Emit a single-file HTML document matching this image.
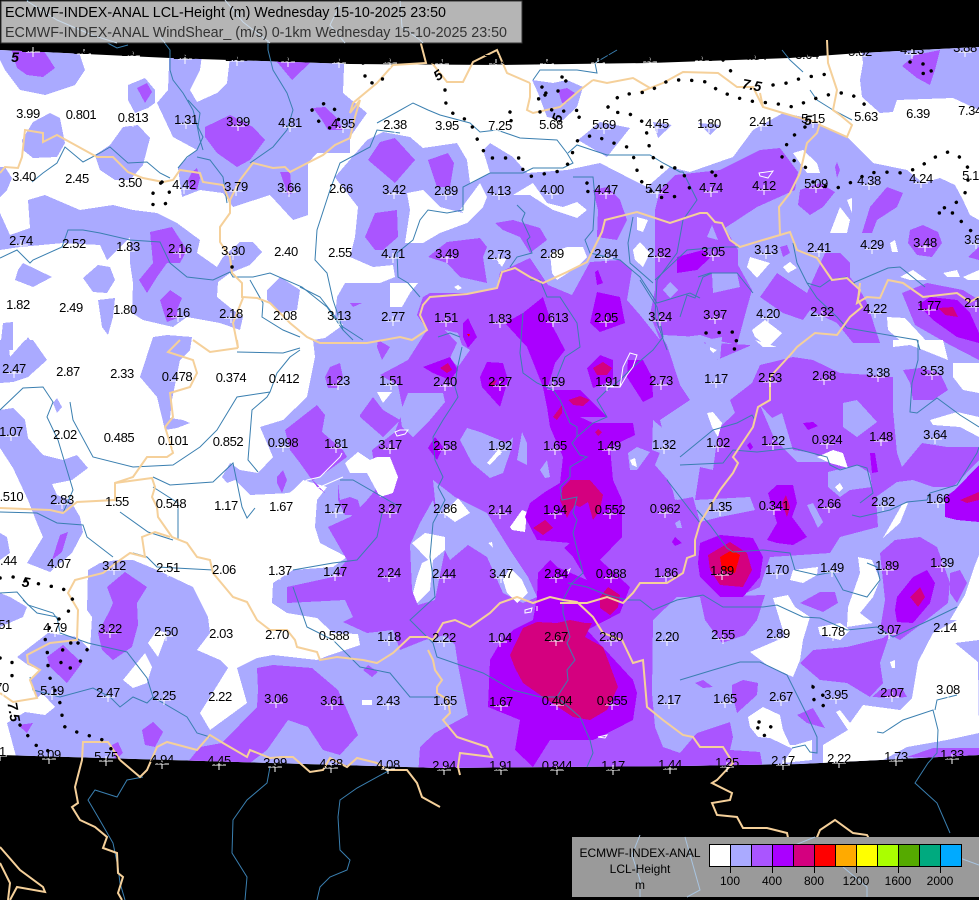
<!DOCTYPE html>
<html><head><meta charset="utf-8"><style>
html,body{margin:0;padding:0;background:#000;width:979px;height:900px;overflow:hidden}
svg{display:block}
.l text{font:13px "Liberation Sans",sans-serif;letter-spacing:-.4px;fill:#000;text-anchor:middle}
.c text{font:italic bold 14px "Liberation Sans",sans-serif;fill:#000;text-anchor:middle}
.f polygon{shape-rendering:crispEdges}
.r{fill:none;stroke:#3a7fb0;stroke-width:1}
.t{fill:none;stroke:#f5d09a;stroke-width:2}
.d{fill:none;stroke:#000;stroke-width:3.4;stroke-linecap:round;stroke-dasharray:.1 13}
.w{fill:none;stroke:#fff;stroke-width:1}
</style></head><body>
<svg width="979" height="900" viewBox="0 0 979 900" xmlns="http://www.w3.org/2000/svg">
<defs>
<clipPath id="m"><path d="M0,50L170,58L350,64L500,65L650,63L790,58L860,53L979,47L979,755L800,764L680,766L440,768L0,755Z"/></clipPath>
<marker id="x" markerUnits="userSpaceOnUse" markerWidth="18" markerHeight="18" refX="9" refY="9" overflow="visible"><path d="M2,9H16M9,4V14" stroke="#fff" stroke-width="1" fill="none"/></marker>
</defs>
<rect width="979" height="900" fill="#000"/>
<g clip-path="url(#m)" class="f">
<rect width="979" height="900" fill="#fff"/>
<g fill="#aaaaff">
<polygon points="0,40 75,40 85,70 75,85 45,95 20,90 5,70 0,60"/>
<polygon points="128,85 145,78 155,90 155,103 148,108 135,113 128,100"/>
<polygon points="170,40 204,40 200,70 190,90 197,102 217,93 227,83 232,40 345,40 343,93 367,113 350,137 350,153 317,153 308,163 308,215 293,220 270,195 233,207 223,193 200,190 182,197 178,168 190,155 197,150 173,137 157,103 168,90"/>
<polygon points="95,155 110,145 123,127 138,125 150,138 143,165 130,180 115,180 100,170"/>
<polygon points="22,140 33,122 50,113 60,118 65,143 57,157 33,158 23,150"/>
<polygon points="0,167 5,167 12,178 7,190 0,197"/>
<polygon points="0,213 10,235 30,228 28,200 45,195 80,210 113,205 133,210 157,213 177,223 200,240 197,253 217,267 223,257 240,242 253,242 262,252 250,265 230,273 218,282 217,297 233,310 243,317 240,330 220,323 187,317 173,327 143,320 132,313 133,283 130,263 130,237 107,260 100,245 63,243 20,247 0,250"/>
<polygon points="23,263 52,277 33,287 15,280 18,270"/>
<polygon points="83,278 98,265 110,267 115,280 107,293 93,292"/>
<polygon points="98,300 115,298 113,317 108,335 102,327"/>
<polygon points="3,323 13,322 13,350 0,350"/>
<polygon points="20,350 28,337 37,350"/>
<polygon points="0,340 8,340 10,357 25,340 33,340 47,360 28,377 13,382 0,383"/>
<polygon points="267,290 280,277 300,290 297,310 280,313 267,300"/>
<polygon points="140,377 153,337 167,335 192,337 190,350 180,360 172,400 170,418 183,420 190,423 177,428 165,430 157,397"/>
<polygon points="0,410 13,408 25,420 28,438 43,455 63,460 77,455 88,468 72,480 52,484 57,495 70,500 80,517 83,532 72,553 50,572 27,563 43,537 37,523 28,500 13,468 0,448"/>
<polygon points="53,403 57,398 62,407 57,413"/>
<polygon points="0,533 7,537 10,553 0,560"/>
<polygon points="0,593 10,597 27,607 23,617 0,627"/>
<polygon points="532,80 553,83 567,80 583,87 577,107 563,120 547,117 538,93"/>
<polygon points="578,140 600,122 630,128 607,157"/>
<polygon points="653,122 672,125 658,138"/>
<polygon points="698,123 720,125 710,135"/>
<polygon points="860,40 979,40 979,110 953,98 897,100 893,112 880,113 862,97 860,80 863,63"/>
<polygon points="335,177 367,140 383,132 410,137 423,148 457,143 467,160 470,183 490,173 483,150 490,143 513,157 527,173 567,170 600,163 633,180 647,187 670,167 690,172 733,157 753,130 783,113 803,117 847,137 873,163 907,170 923,183 940,178 955,185 963,200 970,215 979,220 979,800 0,800 17,760 7,723 25,712 45,715 55,707 42,693 37,698 33,690 30,680 40,670 28,665 17,657 48,633 77,637 90,650 92,617 87,610 88,570 100,563 117,560 133,560 157,570 193,587 208,617 210,633 197,650 220,660 228,668 200,713 210,730 247,703 237,668 257,658 273,655 317,660 330,655 360,645 358,634 333,633 317,618 287,613 272,603 273,583 293,570 333,567 347,557 320,543 315,527 317,500 327,487 303,480 290,493 250,495 235,480 227,483 222,477 230,463 240,470 258,473 273,457 260,427 283,420 307,397 315,357 313,340 325,338 343,325 335,317 337,297 345,283 380,283 395,277 393,265 373,267 350,257 355,237 358,207 337,180"/>
</g>
<g fill="#aa55ff">
<polygon points="10,45 40,45 55,68 43,77 27,75 17,68"/>
<polygon points="137,88 147,83 152,92 145,103"/>
<polygon points="205,127 230,115 253,127 265,140 250,160 237,167 217,153 205,137"/>
<polygon points="267,50 313,50 313,60 292,80"/>
<polygon points="313,108 325,107 337,118 343,130 328,130 322,120"/>
<polygon points="280,172 290,172 292,193 288,195"/>
<polygon points="192,172 197,168 200,178 197,190 190,190 188,180"/>
<polygon points="150,232 172,227 187,250 180,263 167,263 157,277 147,293 139,280 153,263"/>
<polygon points="160,300 170,290 182,298 177,310 180,317 167,322 163,310"/>
<polygon points="902,66 915,55 940,50 935,70 930,85 917,78"/>
<polygon points="368,160 380,142 395,138 415,160 395,183"/>
<polygon points="428,160 448,153 454,163 450,187 437,187"/>
<polygon points="365,237 375,213 397,210 398,237 383,250 375,250"/>
<polygon points="428,257 447,242 480,238 487,247 483,257 487,283 460,277 447,263"/>
<polygon points="495,223 513,220 540,228 547,240 530,253 520,237 503,230"/>
<polygon points="593,190 607,187 620,200 627,220 617,240 597,237 598,210"/>
<polygon points="350,303 362,303 353,307"/>
<polygon points="558,90 567,88 575,93 567,103 562,103"/>
<polygon points="800,190 820,183 835,192 823,207 810,215 798,205"/>
<polygon points="862,233 870,207 887,187 903,193 897,207 877,220 872,233"/>
<polygon points="835,167 837,162 840,170 837,178"/>
<polygon points="910,230 923,225 938,232 942,243 932,257 917,255 908,243"/>
<polygon points="968,257 979,247 979,260"/>
<polygon points="780,247 787,245 790,253 783,257"/>
<polygon points="655,290 655,210 660,190 675,175 720,170 760,150 780,148 798,172 795,190 757,207 725,228 738,250 738,265 752,290 745,315 737,345 715,340 700,335 660,340 650,315"/>
<polygon points="760,297 777,273 807,293 825,253 840,253 850,263 850,277 860,290 867,303 880,343 853,343 837,323 810,310 803,320 783,313"/>
<polygon points="903,370 920,368 940,373 948,390 933,400 913,400 910,383"/>
<polygon points="902,293 927,283 963,290 979,300 979,360 950,345 915,325"/>
<polygon points="752,383 760,365 793,357 813,360 840,373 870,375 893,377 893,410 897,453 902,467 922,443 947,447 979,447 979,460 953,487 933,487 913,480 897,482 876,497 878,527 840,537 830,553 770,557 760,587 730,600 697,597 677,597 653,620 652,693 655,727 663,747 680,753 697,733 730,722 733,737 730,750 760,752 767,790 417,790 420,747 435,733 468,715 458,665 455,645 445,635 425,640 400,650 393,630 367,633 343,622 353,617 345,600 287,603 287,587 333,577 347,560 328,527 350,517 367,500 377,488 372,450 395,432 403,410 398,385 380,375 408,360 427,330 417,315 423,297 430,293 473,293 497,288 500,272 530,258 548,285 572,295 590,262 620,260 632,270 627,300 640,315 660,340 750,345"/>
<polygon points="285,430 317,405 325,415 322,432 343,450 347,457 325,473 313,480 325,493 317,487 300,463 290,450"/>
<polygon points="277,477 283,470 287,480 282,493 277,483"/>
<polygon points="360,415 373,397 383,410 400,420 383,437 360,417"/>
<polygon points="325,377 330,367 340,363 343,377 337,388 328,388"/>
<polygon points="378,340 390,347 382,360 377,347"/>
<polygon points="338,483 340,500 350,497 358,500 362,515 345,515 338,500"/>
<polygon points="98,633 110,610 113,603 107,587 125,572 147,587 137,603 138,625 132,647 113,660 102,650"/>
<polygon points="47,657 63,645 82,663 67,683 50,667"/>
<polygon points="18,725 33,723 27,733"/>
<polygon points="112,745 118,742 123,753 115,760"/>
<polygon points="142,730 153,722 163,732 155,747 145,745"/>
<polygon points="60,535 68,532 62,552 52,560"/>
<polygon points="257,668 273,665 312,668 338,690 347,710 358,735 340,755 323,750 308,727 288,720 267,750 250,763 187,763 200,747 222,743 257,707 258,690"/>
<polygon points="363,670 368,665 378,672 372,677"/>
<polygon points="880,553 895,540 920,537 937,547 950,583 948,603 920,625 900,640 880,630 885,600"/>
<polygon points="950,573 960,570 967,583 957,603 950,593"/>
<polygon points="800,663 813,650 847,647 883,638 890,633 880,663 883,683 870,697 847,683 820,680"/>
<polygon points="872,697 880,690 902,688 907,697 893,698"/>
<polygon points="797,715 813,708 825,728 807,723"/>
<polygon points="732,685 743,680 758,683 757,695 737,713 732,693"/>
<polygon points="695,683 703,680 713,687 703,688"/>
<polygon points="700,597 705,620 722,643 745,635 757,620 765,595"/>
<polygon points="800,603 820,592 835,592 838,603 823,612"/>
<polygon points="907,757 933,748 979,748 979,760"/>
</g>
<g fill="#aaaaff">
<polygon points="707,237 712,225 718,240"/>
<polygon points="712,273 737,273 740,287 713,293"/>
<polygon points="663,290 670,282 678,290 670,298"/>
<polygon points="655,325 663,335 700,337 717,360 752,345 752,383 730,400 735,413 720,427 717,440 713,470 700,467 695,500 750,497 755,510 720,517 700,522 693,497 677,500 668,480 655,465 665,440 660,420 690,400 680,385 667,345"/>
<polygon points="706,340 722,337 720,360 704,357"/>
<polygon points="408,393 443,393 445,402 430,420 413,437 402,427 400,413"/>
<polygon points="445,330 458,333 462,345 470,350 458,367 450,358 457,343"/>
<polygon points="460,440 467,428 480,432 507,443 513,437 512,447 503,473 490,478 472,463"/>
<polygon points="517,460 522,432 527,443 527,465"/>
<polygon points="540,470 547,460 550,477 545,478"/>
<polygon points="628,453 637,447 650,452 637,470 630,470"/>
<polygon points="653,420 673,437 677,443 660,453 652,450"/>
<polygon points="843,403 857,400 877,422 857,437 843,427"/>
<polygon points="828,472 857,465 870,473 872,487 850,490 840,497 828,487"/>
<polygon points="807,505 813,503 823,522 818,528"/>
<polygon points="760,405 772,418 782,413 793,450 813,453 827,462 797,462 775,440"/>
<polygon points="433,480 455,497 487,513 510,550 528,577 537,597 523,603 503,593 487,557 468,545 450,560 443,547 437,520"/>
<polygon points="410,545 420,523 433,500 445,550 435,600 418,605 412,590"/>
<polygon points="672,487 680,485 682,497 675,500"/>
<polygon points="675,523 680,520 682,528 677,528"/>
</g>
<g fill="#fff">
<polygon points="513,195 533,183 547,203 563,207 577,202 587,210 577,218 553,210 530,195"/>
<polygon points="407,193 423,190 440,207 463,213 460,210 480,183 487,197 483,207 467,223 440,233 423,243 405,243 410,210"/>
<polygon points="390,283 418,283 410,293 402,307 390,307"/>
<polygon points="454,287 458,285 462,288 458,290"/>
<polygon points="550,253 567,247 583,247 587,257 577,267 557,280 552,273"/>
<polygon points="497,260 507,258 502,267"/>
<polygon points="633,250 640,242 650,253 643,267 635,260"/>
<polygon points="637,217 648,220 643,232 637,230"/>
<polygon points="830,233 840,207 850,220 847,233"/>
<polygon points="847,200 852,198 852,213"/>
<polygon points="890,243 895,240 898,252 892,252"/>
<polygon points="793,153 803,150 817,163 820,173 807,173"/>
<polygon points="750,257 770,263 757,278 747,267"/>
<polygon points="783,267 790,262 797,268 788,273"/>
<polygon points="752,330 765,320 782,333 768,347 755,337"/>
<polygon points="887,317 905,318 930,345 943,340 948,360 923,350 910,345 893,347 905,345 888,330"/>
<polygon points="893,340 943,340 948,360 923,350 910,345 893,347"/>
<polygon points="953,363 979,363 979,393 963,390 953,377"/>
<polygon points="900,277 913,270 927,280 910,280"/>
<polygon points="943,273 957,270 960,277 947,277"/>
<polygon points="963,277 979,270 979,280 968,280"/>
<polygon points="755,340 777,347 763,347"/>
<polygon points="707,413 713,412 722,423 718,437 712,427"/>
<polygon points="817,457 833,450 843,453 848,468 830,463"/>
<polygon points="835,487 840,483 843,488 839,492"/>
<polygon points="883,538 903,503 908,503 900,523"/>
<polygon points="930,420 957,412 979,417 979,437 960,427 933,425"/>
<polygon points="793,570 818,567 817,575 803,583 790,580"/>
<polygon points="858,557 872,560 880,580 873,597 860,613 873,623 847,627 848,607 860,573"/>
<polygon points="750,652 785,637 773,598 788,595 795,607 810,617 803,640 800,660 793,677 767,665"/>
<polygon points="818,627 840,623 850,630 840,640 820,635"/>
<polygon points="823,775 823,745 848,730 836,712 840,710 850,723 863,705 900,710 912,698 918,662 933,633 957,620 950,620 965,595 975,565 979,555 979,640 955,643 978,662 979,733 947,740 907,747 883,760 880,775"/>
<polygon points="783,763 795,745 812,740 812,760"/>
<polygon points="748,717 763,707 780,715 783,730 790,745 800,745 795,750 770,738 758,737 750,727"/>
<polygon points="890,662 895,660 895,668 892,668"/>
<polygon points="443,513 458,498 470,513 455,522"/>
<polygon points="510,527 522,510 527,512 525,532 512,530"/>
<polygon points="488,543 492,542 493,548"/>
<polygon points="412,543 425,533 445,537 445,550 433,560 430,590 417,603 413,593 417,577 422,563 428,560"/>
<polygon points="503,580 510,568 522,580 528,593 517,603 507,593"/>
<polygon points="380,393 385,395 382,402"/>
<polygon points="345,463 358,452 370,460 377,457 390,457 398,477 393,493 380,497 367,473 350,473"/>
<polygon points="377,392 392,392 383,403"/>
<polygon points="487,463 498,450 502,452 490,465"/>
<polygon points="630,460 635,458 637,467 632,465"/>
<polygon points="710,347 717,350 713,353 710,350"/>
<polygon points="123,680 145,653 152,667 147,683 133,688"/>
<polygon points="148,643 157,630 167,633 158,657"/>
<polygon points="362,700 372,700 372,705 362,705"/>
</g>
<g fill="#aa00ff">
<polygon points="523,313 543,297 553,327 565,350 555,363 547,390 580,390 607,417 580,417 593,423 633,423 635,435 610,447 613,480 622,500 622,537 600,560 630,587 620,613 587,630 633,680 637,693 633,720 600,737 593,740 550,740 533,767 515,750 520,720 488,707 490,660 500,643 513,630 533,620 537,597 538,573 550,560 570,543 537,540 525,517 530,503 545,492 560,483 563,457 550,427 547,407 543,387 527,347 505,323"/>
<polygon points="590,323 597,292 620,297 625,323 600,332"/>
<polygon points="587,368 600,355 613,360 613,380 593,388"/>
<polygon points="628,360 643,360 652,377 653,397 643,402 627,377"/>
<polygon points="480,377 487,362 503,363 508,380 500,407 482,387"/>
<polygon points="423,367 450,357 458,370 450,380 433,373"/>
<polygon points="463,323 468,318 477,337 468,348 463,337"/>
<polygon points="428,448 435,437 443,447 437,460"/>
<polygon points="768,493 777,485 793,485 797,503 792,517 807,537 793,545 777,543 767,540 777,523"/>
<polygon points="698,563 700,543 720,535 753,538 763,557 760,577 743,597 720,597 700,577"/>
<polygon points="895,610 897,597 913,577 927,570 935,583 930,603 913,623 897,622"/>
<polygon points="918,305 930,297 957,300 970,313 979,333 979,343 957,337 933,320"/>
<polygon points="945,497 955,490 979,465 979,522 957,520 945,517"/>
<polygon points="672,542 675,537 682,543 675,546"/>
<polygon points="747,445 750,442 753,447 750,450"/>
<polygon points="595,272 598,270 603,283 597,285"/>
<polygon points="870,453 875,453 878,472 872,473"/>
<polygon points="803,423 813,422 818,426 808,430"/>
<polygon points="677,257 703,250 710,258 697,270 677,273"/>
</g>
<polygon fill="#aa55ff" points="550,560 563,547 573,557 587,580 557,567"/>
<g fill="#d4007f">
<polygon points="510,655 523,628 537,622 557,623 570,620 585,623 592,623 585,637 603,647 608,660 618,687 607,710 590,720 573,717 543,697 523,683 515,668"/>
<polygon points="560,500 563,487 570,480 590,480 603,495 600,510 593,520 588,502 580,507 575,505 570,512 567,518 563,507"/>
<polygon points="533,528 545,520 553,528 543,535"/>
<polygon points="600,597 608,587 620,595 618,607 610,615 600,608"/>
<polygon points="568,400 580,396 590,400 583,406 573,405"/>
<polygon points="553,417 562,405 562,413 557,420"/>
<polygon points="593,368 603,362 612,368 607,375 597,375"/>
<polygon points="440,368 448,363 452,370 447,373"/>
<polygon points="595,432 598,429 602,432 598,436"/>
<polygon points="488,383 497,380 493,387"/>
<polygon points="782,503 786,495 790,507 787,517"/>
<polygon points="960,500 979,492 979,500 967,503"/>
<polygon points="708,555 730,542 747,553 752,570 743,587 720,585 710,570"/>
<polygon points="910,597 920,587 925,597 918,607"/>
<polygon points="938,308 953,307 958,317 945,315"/>
</g>
<g fill="#f00">
<polygon points="720,557 732,550 740,555 735,573 722,570"/>
<polygon points="467,334 470,334 469,337"/>
</g>
</g>
<g class="r">
<path d="M27,0L57,20L92,35L117,48L128,45M160,37L170,50L170,70L173,80L183,93L193,110L197,125L200,140L203,150M188,100L200,113L198,127L203,137L197,150L187,157L178,168"/>
<path d="M268,40L268,50L273,70L287,93L293,110L287,130L273,147L250,163M32,182L43,173L57,163L65,147L77,157L83,162L100,153L110,147L128,163L147,162L160,173L170,178M197,157L210,160L223,177L227,203"/>
<path d="M0,258L17,250L30,263L33,260L62,247L68,230L83,230L100,233L130,240L160,242L170,263L187,277L213,280L230,272L233,277L253,277L270,273L302,287L327,307L343,330L353,340M250,280L263,303L262,317L283,330L300,337"/>
<path d="M400,133L377,130L370,147L340,163L330,190L317,230L315,260L327,273L333,300L343,330M377,123L397,112L413,103L428,110L440,115L470,123L480,132L497,130L520,138L557,140L567,153L573,163L563,168L533,168L523,173L490,173L463,187L463,210L447,213L428,210L420,220L413,240L397,253L398,277L408,283L420,297"/>
<path d="M568,153L577,145L607,155L633,155L650,155L663,163L680,172L683,172L697,200L683,220L677,253L657,280L655,317L667,350M573,177L593,177L595,197L593,230L585,240L590,253L620,260L640,277L657,303L690,293L700,298M517,205L525,213L522,220L530,237L527,240L532,253L517,257L510,267M633,217L628,243L630,263L653,283"/>
<path d="M698,277L710,273L737,273L753,293M655,280L687,250L723,247L740,247M680,317L687,295L695,298L703,277L712,273M793,243L797,263L807,283L817,298L837,317L847,328L917,340L920,350M807,283L820,287L830,280L847,277M853,283L888,268L900,267L925,287"/>
<path d="M523,313L520,353L523,373L537,383L553,390L560,400L570,423L577,427L577,437L572,443L580,455L587,457L570,467L570,477L560,487L562,500L577,497L573,513L577,520L573,533L578,553L583,573L572,583L563,600L563,613L570,637L567,643L575,660L567,670L568,680L557,697L580,717L590,740L593,753L587,767M530,280L540,280L547,297L560,297L577,323L580,347L565,357L557,377L553,383M640,280L657,307L663,337L653,350L633,367L620,380L607,390L597,400L607,417L593,423L577,437"/>
<path d="M460,337L450,333L438,337M462,347L457,370L455,387L458,397L443,420L433,437L435,460L443,477L438,487L445,500L433,523L430,557L433,577L435,597L410,620L427,637L433,643L437,657L483,673L513,690L540,697L557,697"/>
<path d="M568,583L587,587L607,595L627,600L640,600L653,610L677,600L703,595L723,607L763,607L777,605L803,617L820,618L847,630L877,627L893,637L930,620L957,607M680,465L723,463L733,450L757,452L793,448L827,457L830,465L840,470L857,465L867,468L873,493L860,503M713,430L737,423L752,415L755,420M713,430L680,457M852,515L860,517L890,510L907,502L927,500L930,493L957,485L977,453L979,447M918,340L918,360L912,383L910,412L917,413L937,398L960,415L979,427"/>
<path d="M697,510L710,525L727,548L733,552L763,550L790,553L795,570L817,575L833,572L843,590L867,597L880,580L877,567L867,563M667,480L700,523M680,680L713,670L740,662L760,662L787,675L808,717L817,737L817,753L810,752L805,745L792,748M877,732L883,733L903,720L933,710L938,730L937,753L928,763L915,783L937,803L950,833M935,710L937,700L957,695"/>
<path d="M270,767L267,783L247,800L233,820L232,853L247,877L245,900M390,770L357,788L340,800L338,817L340,850L350,860L347,870L330,877L320,887L317,900M143,777L127,780L117,797L95,790L88,800L98,817L113,843L118,867L120,883L125,900"/>
<path d="M23,600L37,613L57,617L60,633L88,643L127,652L147,678L153,697L187,717L197,733L210,737M30,677L33,690L60,697L93,688L110,697L120,707L133,697L147,703L153,697"/>
<path d="M0,410L23,388L43,387L53,402L47,417L58,440L67,470L73,490L63,513M70,402L73,420L93,457L133,467L173,465L200,447L217,430L237,397L270,392L277,373L290,357L300,350M237,352L283,353L300,348M258,472L248,460L252,410L267,397L270,392M153,477L170,485L213,482L233,463L242,507L247,518L255,508M120,512L148,532L173,540M153,487L178,503L178,540M0,512L37,513L57,523L83,525L87,537L113,557M133,553L147,557L157,567L213,570M0,593L17,592L28,605L53,613L58,620"/>
<path d="M293,570L333,563L357,560L377,537L382,513M340,480L353,480L400,507M293,587L307,627L333,640L360,667L390,673L410,697L440,697M782,50L790,60L803,72M810,90L817,100L833,110L852,120M533,80L540,70L577,70L597,73L595,63L617,50M300,287L320,297L343,327L363,340"/>
</g>
<g class="w">
<path d="M620,387L623,367L630,353L637,355L633,367L627,375L620,387L607,387M268,497L290,493L307,480L320,477L340,457L342,453M313,490L343,477M759,173L773,171L768,178L760,176ZM525,610L532,608L531,612L525,613ZM598,737L607,735L605,738ZM567,571L570,569L568,574M537,606L537,611M400,430L395,432L397,436L405,434L408,430Z"/>
</g>
<g class="t">
<path d="M400,17L402,27L420,40L426,63L393,65L377,83L353,103L350,113L360,100L355,117L350,138L335,145L323,155L290,172L285,167L273,168L253,163L240,180L230,200L230,213L220,227L220,242L230,257L232,273L242,283L242,297L257,298L270,303L290,323L307,337L320,343L367,343L400,337L412,340L427,330L420,315L423,305L430,297L467,294L497,288L502,272L515,268L530,277L543,283L567,272L587,262L602,232L605,220L637,212L670,223L700,213L707,213L715,222L722,223L730,240L740,247L763,240L780,235L790,232L797,250L817,258L832,280L847,278L860,290L857,303L867,297L880,298L888,280L903,283L923,297L957,293L970,302L979,297"/>
<path d="M780,235L779,207L790,193L800,173L807,143L817,133L820,123L807,120L783,113L763,107L760,93M640,92L663,83L683,72L718,73L737,87L753,87L763,107M593,80L607,83L633,78L650,88M580,90L560,107L533,113L527,110L530,97L530,83M580,90L593,80M530,83L507,73L497,50L473,62L463,82L447,82L432,63M820,125L847,137L852,125L840,115L833,110L837,90L828,63L827,40"/>
<path d="M0,173L5,167L18,168L22,157L25,130L43,133L43,142L57,135L97,157L113,157L128,172L143,178L163,182L173,180L180,170L200,173L203,182L223,185L230,203M243,298L233,323L238,348L237,340M180,340L168,352L193,360L197,373L190,387L170,393L173,417L165,427L170,443L173,453L167,457L147,457L133,477L115,483L115,500L77,502L63,513L50,510L0,508M193,340L210,352L238,348"/>
<path d="M115,483L152,478L155,487L152,497L157,507L158,517L172,537L187,543L197,557L210,560L213,573L233,597L247,602L257,620L270,630L287,630L295,640L297,647L317,652L320,660L337,657L363,660L377,663L393,653L410,637L427,637L433,640L443,623L455,620L470,627L490,613L500,603L517,597L533,603L550,597L563,600L577,602L593,617L603,633L622,640L633,663L643,660L647,707L663,720L683,735L693,737L700,747L723,747L733,763L717,780L712,783L732,793L730,800L712,803L717,815L737,817L743,828L767,828L787,833L790,847"/>
<path d="M560,603L587,603L607,597L623,603L633,593L640,583L667,583L683,573L687,558L695,555L695,540L700,523L720,490L733,473L738,463L733,457L753,427L758,407L770,400L770,377L792,353L797,347L815,333L837,335L850,317L862,307L858,300L860,283"/>
<path d="M428,650L433,660L435,670L442,680L437,687L437,693L448,700L450,713L443,720L457,737L487,747L492,757L460,753L458,767L460,775M377,763L387,770L407,770L417,783L422,797L440,807M120,760L140,777L147,770L157,747L167,742L197,750L210,735L223,743L247,757L250,750L270,758L283,757L293,757L310,772L323,770L330,758L347,767L357,758L377,763M120,760L108,742L83,742L82,760L75,787L78,803L72,807L80,820L95,827L107,837L103,848L117,853L118,873L123,877L118,893L122,900"/>
<path d="M0,847L20,870L43,887L45,892L17,887L10,900M0,863L10,883L8,900M0,693L13,702L37,698L30,680L40,670L28,663L27,655L50,643L77,640L78,610L68,593L75,580L103,573L120,560L130,553L145,557L142,537L155,532L170,537M813,847L820,830L835,820L853,833L867,835L877,853"/>
</g>
<polyline fill="none" stroke="none" marker-start="url(#x)" marker-mid="url(#x)" marker-end="url(#x)" points="33,52 84,54 133,56 185,59 237,61 288,62 339,63 390,63 442,64 496,64 547,64 598,63 650,62 702,61 755,60 807,59 860,56 912,54 965,52 28,118 81,119 133,122 186,124 238,126 290,127 343,128 395,129 447,130 500,130 551,129 604,129 657,128 709,128 761,126 813,123 866,121 918,118 970,115 24,181 77,183 130,187 184,189 236,191 289,192 341,193 394,194 446,195 499,195 552,194 606,194 657,193 711,192 764,190 816,188 869,185 921,183 974,180 21,245 74,248 128,251 180,253 233,255 286,256 340,257 393,258 447,258 499,259 552,258 606,258 659,257 713,256 766,254 819,252 872,249 925,247 976,244 18,309 71,312 125,314 178,317 231,318 285,320 339,320 393,321 446,322 500,323 553,322 606,322 660,321 715,319 768,318 822,316 875,313 929,310 976,307 14,373 68,376 122,378 177,381 231,382 284,383 338,385 391,385 445,386 500,386 553,386 607,386 661,385 716,383 770,382 824,380 878,377 932,375 11,436 65,439 119,442 173,445 228,446 283,447 336,448 390,449 445,450 500,450 555,450 609,450 664,449 718,447 773,445 827,444 881,441 935,439 10,501 62,504 117,506 171,508 226,510 281,511 336,513 390,513 445,513 500,514 555,514 610,514 665,513 720,511 774,510 829,508 883,506 938,503 5,565 59,568 114,570 168,572 224,574 280,575 335,576 389,577 444,578 501,578 556,578 611,578 666,577 722,575 777,574 832,572 887,570 942,567 5,629 55,632 110,633 166,636 221,638 277,639 334,640 389,641 444,642 500,642 556,641 611,641 667,641 723,639 778,638 833,636 889,634 945,632 3,692 52,695 108,697 164,700 220,701 276,703 332,705 388,705 445,705 501,706 557,705 612,705 669,704 725,703 781,701 836,699 892,697 948,694 0,756 49,759 106,761 162,764 219,765 275,767 331,768 388,769 444,770 501,770 557,770 613,770 670,769 727,767 783,765 839,763 896,761 952,759"/>
<g class="d">
<path d="M0,578L13,577L43,585L62,588L68,593L73,600L70,607L67,615L57,620L47,630L45,638L48,657L48,673L52,683L58,698L62,708L62,725L70,730L87,735L103,740L110,747L115,757"/>
<path d="M0,658L12,662L12,680L13,688M20,725L25,732L35,745L45,748L50,753M78,643L88,648L83,657L78,665L72,668L63,668L60,660L62,652L65,643Z"/>
<path d="M445,90L445,100L448,110L460,118L470,120L475,135L483,150L488,158L520,158L523,170L527,177L560,171L567,165L572,158L573,148L578,140L593,135L610,142L627,147L633,155L637,170L638,178L645,185L657,197L667,198L683,195"/>
<path d="M608,107L620,95L637,93L647,92L655,88L663,83L672,80L688,80L707,82L720,92L730,95L738,98L748,100L755,102L773,103L783,105L793,107L803,103L817,98L835,93L843,93L852,95L860,100L865,105M608,107L610,112L628,113L643,122L648,137L650,153L660,167L677,168L683,173L688,183L690,190"/>
<path d="M773,85L787,83L795,80L807,77L822,75L830,73M723,60L730,70L735,77M805,127L797,133L788,140L785,150L782,157L790,158L798,163L810,170M813,182L827,187L837,188L852,182L860,178L867,173L883,172L903,173L918,168L927,162L933,158L948,152L957,155L963,160L968,168L968,183L965,193L957,202L947,207L937,210L937,213L955,213L960,220L967,228L977,235"/>
<path d="M910,62L930,65L932,75L915,72"/>
<path d="M312,110L325,103L340,113L338,122L330,128L322,125L315,117ZM162,182L168,187L170,195L167,203L159,206L151,204L152,196L155,188ZM363,63L365,73L365,82L373,83L382,82L383,75M813,687L819,690L827,701L822,707L815,702L812,695ZM759,722L763,722L771,727L770,734L762,736L757,732ZM712,172L720,173L713,177M510,112L508,117L512,117L510,125M587,183L583,190L593,193L596,187"/>
<path d="M542,87L538,93L540,112L548,108L558,113L567,110L575,110L583,112L577,120M562,77L570,78L563,83L558,90L558,103M545,95L548,100L545,90"/>
<path d="M706,333L735,332L738,340L733,342L732,349L740,349M232,267L233.5,267"/>
</g>
<g class="c">
<text x="15" y="62">5</text>
<text x="438" y="80" transform="rotate(-35 438 75)">5</text>
<text x="557" y="123" transform="rotate(-70 557 118)">5</text>
<text x="752" y="90" transform="rotate(10 752 85)">7.5</text>
<text x="808" y="125">5</text>
<text x="26" y="587" transform="rotate(10 26 582)">5</text>
<text x="14" y="717" transform="rotate(80 14 712)">7.5</text>
</g>
<g class="l">
<text x="33" y="52">1.75</text><text x="84" y="54">3.24</text><text x="133" y="56">1.83</text><text x="185" y="59">2.48</text><text x="237" y="61">2.66</text><text x="288" y="62">3.84</text><text x="339" y="63">2.64</text><text x="390" y="63">1.83</text><text x="442" y="64">6.04</text><text x="496" y="64">7.13</text><text x="547" y="64">7.28</text><text x="598" y="63">6.13</text><text x="650" y="62">3.83</text><text x="702" y="61">3.88</text><text x="755" y="60">4.84</text><text x="807" y="59">3.64</text><text x="860" y="56">5.82</text><text x="912" y="54">4.13</text><text x="965" y="52">3.88</text>
<text x="28" y="118">3.99</text><text x="81" y="119">0.801</text><text x="133" y="122">0.813</text><text x="186" y="124">1.31</text><text x="238" y="126">3.99</text><text x="290" y="127">4.81</text><text x="343" y="128">4.95</text><text x="395" y="129">2.38</text><text x="447" y="130">3.95</text><text x="500" y="130">7.25</text><text x="551" y="129">5.68</text><text x="604" y="129">5.69</text><text x="657" y="128">4.45</text><text x="709" y="128">1.80</text><text x="761" y="126">2.41</text><text x="813" y="123">5.15</text><text x="866" y="121">5.63</text><text x="918" y="118">6.39</text><text x="970" y="115">7.34</text>
<text x="24" y="181">3.40</text><text x="77" y="183">2.45</text><text x="130" y="187">3.50</text><text x="184" y="189">4.42</text><text x="236" y="191">3.79</text><text x="289" y="192">3.66</text><text x="341" y="193">2.66</text><text x="394" y="194">3.42</text><text x="446" y="195">2.89</text><text x="499" y="195">4.13</text><text x="552" y="194">4.00</text><text x="606" y="194">4.47</text><text x="657" y="193">5.42</text><text x="711" y="192">4.74</text><text x="764" y="190">4.12</text><text x="816" y="188">5.09</text><text x="869" y="185">4.38</text><text x="921" y="183">4.24</text><text x="974" y="180">5.14</text>
<text x="21" y="245">2.74</text><text x="74" y="248">2.52</text><text x="128" y="251">1.83</text><text x="180" y="253">2.16</text><text x="233" y="255">3.30</text><text x="286" y="256">2.40</text><text x="340" y="257">2.55</text><text x="393" y="258">4.71</text><text x="447" y="258">3.49</text><text x="499" y="259">2.73</text><text x="552" y="258">2.89</text><text x="606" y="258">2.84</text><text x="659" y="257">2.82</text><text x="713" y="256">3.05</text><text x="766" y="254">3.13</text><text x="819" y="252">2.41</text><text x="872" y="249">4.29</text><text x="925" y="247">3.48</text><text x="976" y="244">3.81</text>
<text x="18" y="309">1.82</text><text x="71" y="312">2.49</text><text x="125" y="314">1.80</text><text x="178" y="317">2.16</text><text x="231" y="318">2.18</text><text x="285" y="320">2.08</text><text x="339" y="320">3.13</text><text x="393" y="321">2.77</text><text x="446" y="322">1.51</text><text x="500" y="323">1.83</text><text x="553" y="322">0.613</text><text x="606" y="322">2.05</text><text x="660" y="321">3.24</text><text x="715" y="319">3.97</text><text x="768" y="318">4.20</text><text x="822" y="316">2.32</text><text x="875" y="313">4.22</text><text x="929" y="310">1.77</text><text x="976" y="307">2.14</text>
<text x="14" y="373">2.47</text><text x="68" y="376">2.87</text><text x="122" y="378">2.33</text><text x="177" y="381">0.478</text><text x="231" y="382">0.374</text><text x="284" y="383">0.412</text><text x="338" y="385">1.23</text><text x="391" y="385">1.51</text><text x="445" y="386">2.40</text><text x="500" y="386">2.27</text><text x="553" y="386">1.59</text><text x="607" y="386">1.91</text><text x="661" y="385">2.73</text><text x="716" y="383">1.17</text><text x="770" y="382">2.53</text><text x="824" y="380">2.68</text><text x="878" y="377">3.38</text><text x="932" y="375">3.53</text>
<text x="11" y="436">1.07</text><text x="65" y="439">2.02</text><text x="119" y="442">0.485</text><text x="173" y="445">0.101</text><text x="228" y="446">0.852</text><text x="283" y="447">0.998</text><text x="336" y="448">1.81</text><text x="390" y="449">3.17</text><text x="445" y="450">2.58</text><text x="500" y="450">1.92</text><text x="555" y="450">1.65</text><text x="609" y="450">1.49</text><text x="664" y="449">1.32</text><text x="718" y="447">1.02</text><text x="773" y="445">1.22</text><text x="827" y="444">0.924</text><text x="881" y="441">1.48</text><text x="935" y="439">3.64</text>
<text x="8" y="501">0.510</text><text x="62" y="504">2.83</text><text x="117" y="506">1.55</text><text x="171" y="508">0.548</text><text x="226" y="510">1.17</text><text x="281" y="511">1.67</text><text x="336" y="513">1.77</text><text x="390" y="513">3.27</text><text x="445" y="513">2.86</text><text x="500" y="514">2.14</text><text x="555" y="514">1.94</text><text x="610" y="514">0.552</text><text x="665" y="513">0.962</text><text x="720" y="511">1.35</text><text x="774" y="510">0.341</text><text x="829" y="508">2.66</text><text x="883" y="506">2.82</text><text x="938" y="503">1.66</text>
<text x="5" y="565">1.44</text><text x="59" y="568">4.07</text><text x="114" y="570">3.12</text><text x="168" y="572">2.51</text><text x="224" y="574">2.06</text><text x="280" y="575">1.37</text><text x="335" y="576">1.47</text><text x="389" y="577">2.24</text><text x="444" y="578">2.44</text><text x="501" y="578">3.47</text><text x="556" y="578">2.84</text><text x="611" y="578">0.988</text><text x="666" y="577">1.86</text><text x="722" y="575">1.89</text><text x="777" y="574">1.70</text><text x="832" y="572">1.49</text><text x="887" y="570">1.89</text><text x="942" y="567">1.39</text>
<text x="0" y="629">2.51</text><text x="55" y="632">4.79</text><text x="110" y="633">3.22</text><text x="166" y="636">2.50</text><text x="221" y="638">2.03</text><text x="277" y="639">2.70</text><text x="334" y="640">0.588</text><text x="389" y="641">1.18</text><text x="444" y="642">2.22</text><text x="500" y="642">1.04</text><text x="556" y="641">2.67</text><text x="611" y="641">2.80</text><text x="667" y="641">2.20</text><text x="723" y="639">2.55</text><text x="778" y="638">2.89</text><text x="833" y="636">1.78</text><text x="889" y="634">3.07</text><text x="945" y="632">2.14</text>
<text x="-3" y="692">6.70</text><text x="52" y="695">5.19</text><text x="108" y="697">2.47</text><text x="164" y="700">2.25</text><text x="220" y="701">2.22</text><text x="276" y="703">3.06</text><text x="332" y="705">3.61</text><text x="388" y="705">2.43</text><text x="445" y="705">1.65</text><text x="501" y="706">1.67</text><text x="557" y="705">0.404</text><text x="612" y="705">0.955</text><text x="669" y="704">2.17</text><text x="725" y="703">1.65</text><text x="781" y="701">2.67</text><text x="836" y="699">3.95</text><text x="892" y="697">2.07</text><text x="948" y="694">3.08</text>
<text x="-6" y="756">1.41</text><text x="49" y="759">8.09</text><text x="106" y="761">5.75</text><text x="162" y="764">4.94</text><text x="219" y="765">4.45</text><text x="275" y="767">3.99</text><text x="331" y="768">4.38</text><text x="388" y="769">4.08</text><text x="444" y="770">2.94</text><text x="501" y="770">1.91</text><text x="557" y="770">0.844</text><text x="613" y="770">1.17</text><text x="670" y="769">1.44</text><text x="727" y="767">1.25</text><text x="783" y="765">2.17</text><text x="839" y="763">2.22</text><text x="896" y="761">1.73</text><text x="952" y="759">1.33</text>
</g>
<rect x="1" y="1" width="521" height="42" fill="#b5b5b5" stroke="#333" stroke-width="1"/>
<path d="M27,1L57,20L92,35L117,43M160,37L165,43M268,40L268,43M340,5L330,25L345,43M225,0L243,22L270,43M400,1L402,27L420,40L423,43" fill="none" stroke="#c8d8e8" stroke-width="1"/>
<text x="5" y="17" font-family="'Liberation Sans',sans-serif" font-size="14.3" fill="#000" textLength="441">ECMWF-INDEX-ANAL LCL-Height (m) Wednesday 15-10-2025 23:50</text>
<text x="5" y="37" font-family="'Liberation Sans',sans-serif" font-size="14.3" fill="#333" textLength="502">ECMWF-INDEX-ANAL WindShear_ (m/s) 0-1km Wednesday 15-10-2025 23:50</text>
<rect x="572" y="837" width="407" height="60" fill="#9a9a9a"/>
<path d="M685,837L700,890L687,897M790,847L815,837M843,867L867,887L867,897M957,857L979,865M640,835L632,855L640,880L640,897" fill="none" stroke="#a8c4e0" stroke-width="1"/>
<g shape-rendering="crispEdges" stroke="#000" stroke-width="1">
<rect x="709.5" y="844.5" width="21" height="22" fill="#fff"/><rect x="730.5" y="844.5" width="21" height="22" fill="#aaaaff"/><rect x="751.5" y="844.5" width="21" height="22" fill="#aa55ff"/><rect x="772.5" y="844.5" width="21" height="22" fill="#aa00ff"/><rect x="793.5" y="844.5" width="21" height="22" fill="#d4007f"/><rect x="814.5" y="844.5" width="21" height="22" fill="#f00"/><rect x="835.5" y="844.5" width="21" height="22" fill="#ffaa00"/><rect x="856.5" y="844.5" width="21" height="22" fill="#ff0"/><rect x="877.5" y="844.5" width="21" height="22" fill="#aaff00"/><rect x="898.5" y="844.5" width="21" height="22" fill="#55aa00"/><rect x="919.5" y="844.5" width="21" height="22" fill="#00aa7f"/><rect x="940.5" y="844.5" width="21" height="22" fill="#00aaff"/>
<path d="M730.5,866V873M772.5,866V873M814.5,866V873M856.5,866V873M898.5,866V873M940.5,866V873" fill="none"/>
</g>
<g font-family="'Liberation Sans',sans-serif" font-size="12" fill="#000" text-anchor="middle">
<text x="640" y="857" textLength="121">ECMWF-INDEX-ANAL</text><text x="640" y="873">LCL-Height</text><text x="640" y="889">m</text>
<text x="730" y="885">100</text><text x="772" y="885">400</text><text x="814" y="885">800</text><text x="856" y="885">1200</text><text x="898" y="885">1600</text><text x="940" y="885">2000</text>
</g>
</svg>
</body></html>
